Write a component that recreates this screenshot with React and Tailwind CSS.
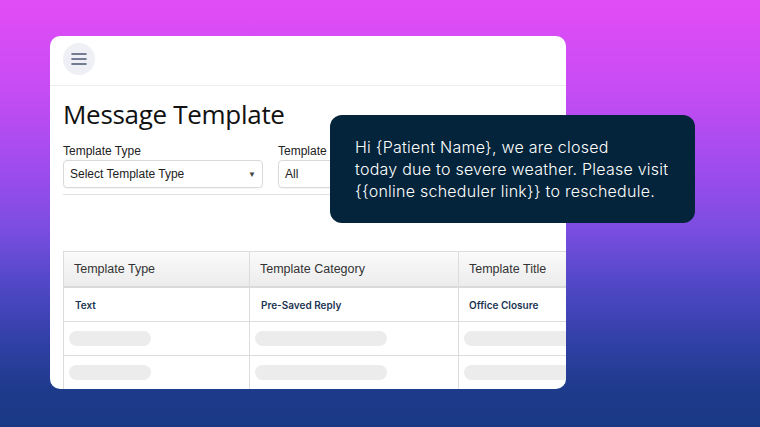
import React from 'react';

const rows = [
  { type: 'Text', category: 'Pre-Saved Reply', title: 'Office Closure' },
  null,
  null,
];

const HamburgerIcon = () => (
  <svg width="16" height="12" viewBox="0 0 16 12" fill="none">
    <path d="M1 1h14M1 6h14M1 11h14" stroke="#4b5673" strokeWidth="1.6" strokeLinecap="round" />
  </svg>
);

const Select = ({ label, value, width }) => (
  <div className={width}>
    <div className="text-[12px] leading-[14px] text-[#222] font-['Liberation_Sans',Arial,sans-serif] mb-[2px]">
      {label}
    </div>
    <div className="h-[28px] border border-[#d9d9d9] rounded-[4px] flex items-center justify-between pl-[6px] pr-[6px] shadow-[0_1px_1px_rgba(0,0,0,0.04)]">
      <span className="text-[12px] text-[#222] font-['Liberation_Sans',Arial,sans-serif]">{value}</span>
      <span className="text-[8px] text-[#444]">▼</span>
    </div>
  </div>
);

const App = () => {
  return (
    <div className="relative w-[760px] h-[427px] overflow-hidden bg-[linear-gradient(180deg,#e24cf6_0%,#c84cf4_20%,#a24cee_38%,#7a4de0_54%,#5248c8_66%,#3140a6_80%,#1d3a8a_92%,#1a3985_100%)] pt-[36px] pl-[50px]">
      <div className="w-[516px] h-[353px] bg-white rounded-[10px] overflow-hidden flex flex-col">
        <div className="h-[50px] shrink-0 border-b border-[#eceef3] px-[13px] pt-[7px]">
          <div className="w-[32px] h-[32px] rounded-full bg-[#eff0f6] flex items-center justify-center">
            <HamburgerIcon />
          </div>
        </div>

        <div className="pl-[13px]">
          <h1 className="mt-[10px] text-[26px] leading-[36px] text-[#111] font-['Open_Sans',sans-serif] tracking-[-0.3px]">
            Message Template
          </h1>
          <div className="mt-[12px] flex gap-[15px]">
            <Select label="Template Type" value="Select Template Type" width="w-[200px]" />
            <Select label="Template Category" value="All" width="w-[200px]" />
          </div>
          <div className="mt-[6px] border-t border-[#e2e2e2]" />

          <div className="mt-[56px] w-[560px] border-l border-t border-[#dcdcdc] font-['Liberation_Sans',Arial,sans-serif]">
            <div className="grid grid-cols-[186px_209px_1fr] h-[36px] bg-[linear-gradient(180deg,#fafafa,#ececec)] border-b-2 border-[#dadada]">
              {['Template Type', 'Template Category', 'Template Title'].map((h, i) => (
                <div
                  key={h}
                  className={`flex items-center pl-[10px] text-[12.5px] text-[#333] ${i < 2 ? 'border-r border-[#dcdcdc]' : ''}`}
                >
                  {h}
                </div>
              ))}
            </div>
            {rows.map((row, r) => (
              <div key={r} className="grid grid-cols-[186px_209px_1fr] h-[34px] border-b border-[#dcdcdc]">
                {[0, 1, 2].map((c) => (
                  <div
                    key={c}
                    className={`flex items-center ${c < 2 ? 'border-r border-[#dcdcdc]' : ''} ${row ? (c === 2 ? 'pl-[10px]' : 'pl-[11px]') : 'pl-[5px]'}`}
                  >
                    {row ? (
                      <span className="text-[10px] font-semibold text-[#1b3452] font-['Inter',sans-serif] pt-[2px]">
                        {[row.type, row.category, row.title][c]}
                      </span>
                    ) : (
                      <div
                        className={`h-[15px] rounded-full bg-[#ececec] ${c === 0 ? 'w-[82px]' : c === 1 ? 'w-[132px]' : 'w-[140px]'}`}
                      />
                    )}
                  </div>
                ))}
              </div>
            ))}
          </div>
        </div>
      </div>

      <div className="absolute left-[330px] top-[115px] w-[365px] h-[108px] rounded-[12px] bg-[#03243a] pl-[25px] pt-[21px]">
        <p className="text-[16px] leading-[22px] tracking-[0.25px] text-white font-['Inter',sans-serif] font-light">
          Hi {'{'}Patient Name{'}'}, we are closed
          <br />
          today due to severe weather. Please visit
          <br />
          {'{{'}online scheduler link{'}}'} to reschedule.
        </p>
      </div>
    </div>
  );
};

export default App;
